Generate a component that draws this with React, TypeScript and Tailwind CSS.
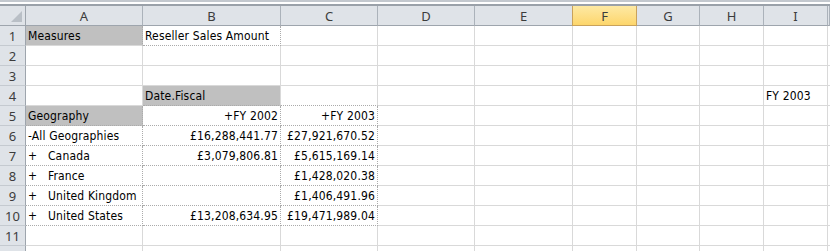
import React from "react";

const cols = ["A", "B", "C", "D", "E", "F", "G", "H", "I", ""];

type Cell = {
  text?: string;
  align?: "left" | "right";
  gray?: boolean;
  dotR?: boolean;
  dotB?: boolean;
};

// pivot table contents, keyed by row then column index (A = 0)
const data: Record<number, Record<number, Cell>> = {
  1: {
    0: { text: "Measures", gray: true, dotR: true },
    1: { text: "Reseller Sales Amount", dotR: true, dotB: true },
  },
  4: {
    1: { text: "Date.Fiscal", gray: true, dotB: true },
    2: { dotB: true },
    8: { text: "FY 2003" },
  },
  5: {
    0: { text: "Geography", gray: true, dotR: true, dotB: true },
    1: { text: "+FY 2002", align: "right", dotR: true, dotB: true },
    2: { text: "+FY 2003", align: "right", dotR: true, dotB: true },
  },
  6: {
    0: { text: "-All Geographies", dotR: true, dotB: true },
    1: { text: "£16,288,441.77", align: "right", dotR: true, dotB: true },
    2: { text: "£27,921,670.52", align: "right", dotR: true, dotB: true },
  },
  7: {
    0: { text: "+   Canada", dotR: true, dotB: true },
    1: { text: "£3,079,806.81", align: "right", dotR: true, dotB: true },
    2: { text: "£5,615,169.14", align: "right", dotR: true, dotB: true },
  },
  8: {
    0: { text: "+   France", dotR: true, dotB: true },
    1: { dotR: true, dotB: true },
    2: { text: "£1,428,020.38", align: "right", dotR: true, dotB: true },
  },
  9: {
    0: { text: "+   United Kingdom", dotR: true, dotB: true },
    1: { dotR: true, dotB: true },
    2: { text: "£1,406,491.96", align: "right", dotR: true, dotB: true },
  },
  10: {
    0: { text: "+   United States", dotR: true, dotB: true },
    1: { text: "£13,208,634.95", align: "right", dotR: true, dotB: true },
    2: { text: "£19,471,989.04", align: "right", dotR: true, dotB: true },
  },
};

const gridCols =
  "grid grid-rows-[20px] grid-cols-[26px_117px_138px_97px_97px_98px_64px_63px_64px_64px_1fr]";

export default function App() {
  const rows = Array.from({ length: 12 }, (_, i) => i + 1);
  return (
    <div className="w-[830px] h-[251px] overflow-hidden bg-white">
      <div className="h-[2px] bg-[#c3c8ce]" />
      <div className="h-[2px] bg-white" />
      <div className="h-[2px] bg-[#9aa1a9]" />
      {/* column headers */}
      <div className={`${gridCols} h-[20px]`}>
        <div className="relative bg-[#dfe3e8] [border-right:1px_solid_#9ea5ad] [border-bottom:1px_solid_#9ea5ad]">
          <svg className="absolute right-[3px] bottom-[3px]" width="11" height="11" viewBox="0 0 11 11">
            <polygon points="11,0 11,11 0,11" fill="#b9bfc6" />
          </svg>
        </div>
        {cols.map((c, i) =>
          c === "F" ? (
            <div
              key={i}
              className="flex items-center justify-center leading-[16px] bg-gradient-to-b from-[#fde9a3] to-[#fdd66b] [border-right:1px_solid_#c9a25b] [border-bottom:1px_solid_#c9a25b] [border-left:1px_solid_#c9a25b] -ml-px text-[13px] text-[#3c3c3c] font-['Noto_Sans',sans-serif]"
            >
              {c}
            </div>
          ) : (
            <div
              key={i}
              className="flex items-center justify-center leading-[16px] bg-[#dfe3e8] [border-right:1px_solid_#abb2ba] [border-bottom:1px_solid_#9ea5ad] text-[13px] text-[#3c3c3c] font-['Noto_Sans',sans-serif]"
            >
              {c}
            </div>
          )
        )}
      </div>
      {rows.map((r) => (
        <div key={r} className={`${gridCols} h-[20px]`}>
          <div className="flex items-center justify-center leading-[16px] bg-[#dfe3e8] [border-right:1px_solid_#9ea5ad] [border-bottom:1px_solid_#c5cad0] text-[13px] text-[#3c3c3c] font-['Noto_Sans',sans-serif]">
            {r < 12 ? r : ""}
          </div>
          {cols.map((_, ci) => {
            const cell = data[r]?.[ci] ?? {};
            return (
              <div
                key={ci}
                className={[
                  "flex items-center leading-[16px] whitespace-pre text-[12px] tracking-[0.15px] text-black font-['DejaVu_Sans_Condensed','DejaVu_Sans',sans-serif]",
                  cell.align === "right" ? "justify-end pr-[2px]" : "pl-[2px]",
                  cell.gray ? "bg-[#c0c0c0]" : "bg-white",
                  cell.dotR
                    ? "[border-right:1px_dotted_#ababab]"
                    : "[border-right:1px_solid_#d9d9d9]",
                  cell.dotB
                    ? "[border-bottom:1px_dotted_#ababab]"
                    : "[border-bottom:1px_solid_#d9d9d9]",
                ].join(" ")}
              >
                {cell.text ?? ""}
              </div>
            );
          })}
        </div>
      ))}
    </div>
  );
}
